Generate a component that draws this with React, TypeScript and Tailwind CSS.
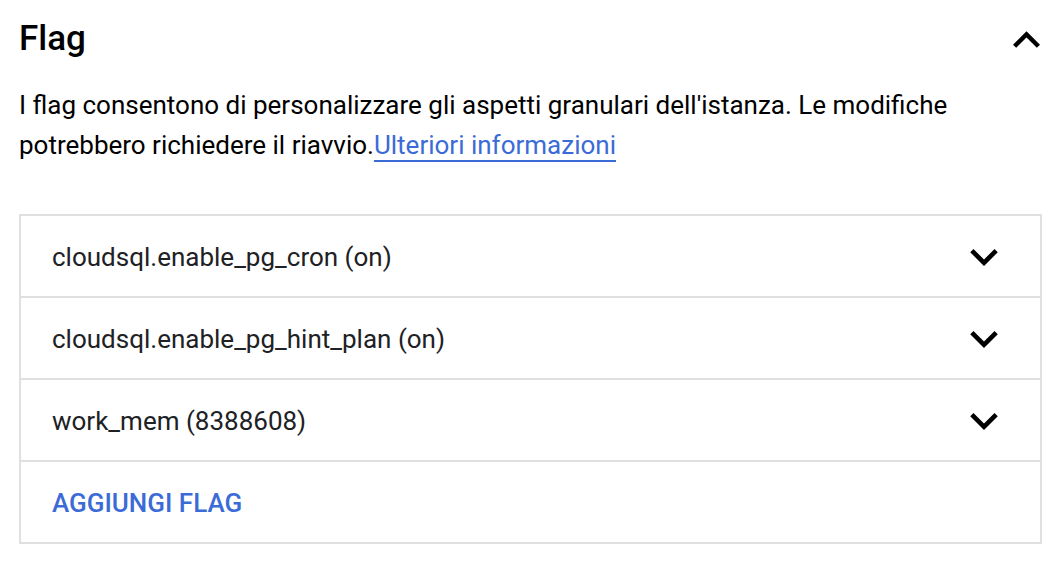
import { ReactNode } from "react";

function ChevronDown() {
  return (
    <svg width="28" height="17" viewBox="6 8.59 12 7.41" className="shrink-0">
      <path d="M16.59 8.59L12 13.17 7.41 8.59 6 10l6 6 6-6z" fill="#000" />
    </svg>
  );
}

function ChevronUp() {
  return (
    <svg width="27" height="17" viewBox="6 8 12 7.41" className="shrink-0">
      <path d="M12 8l-6 6 1.41 1.41L12 10.83l4.59 4.58L18 14z" fill="#000" />
    </svg>
  );
}

function FlagRow({ children }: { children: ReactNode }) {
  return (
    <div className="flex h-[82px] items-center justify-between border-t-2 border-[#e0e0e0] pl-[31px] pr-[42px] pt-[2px] first:border-t-0 first:h-[80px]">
      <span className="text-[26px] text-[#202124]">{children}</span>
      <ChevronDown />
    </div>
  );
}

export default function App() {
  const flags = [
    "cloudsql.enable_pg_cron (on)",
    "cloudsql.enable_pg_hint_plan (on)",
    "work_mem (8388608)",
  ];

  return (
    <div className="min-h-screen bg-white px-[19px] pt-[15px] font-['Roboto',sans-serif] text-[#202124]">
      <div className="flex items-center justify-between pr-[5px]">
        <h2 className="text-[35px] font-medium leading-[48px] text-black">Flag</h2>
        <ChevronUp />
      </div>

      <p className="mt-[22px] text-[26px] leading-[40px] text-black">
        I flag consentono di personalizzare gli aspetti granulari dell'istanza. Le modifiche
        <br />
        potrebbero richiedere il riavvio.
        <a
          href="#"
          className="text-[#3b6bd6] underline decoration-[#3b6bd6] decoration-2 underline-offset-[6px]"
        >
          Ulteriori informazioni
        </a>
      </p>

      <div className="mt-[49px] w-[1023px] border-2 border-[#e0e0e0]">
        {flags.map((f) => (
          <FlagRow key={f}>{f}</FlagRow>
        ))}
        <div className="flex h-[82px] items-center border-t-2 border-[#e0e0e0] pl-[31px] pt-[2px]">
          <button className="text-[26px] font-medium text-[#3b6bd6]">AGGIUNGI FLAG</button>
        </div>
      </div>
    </div>
  );
}
